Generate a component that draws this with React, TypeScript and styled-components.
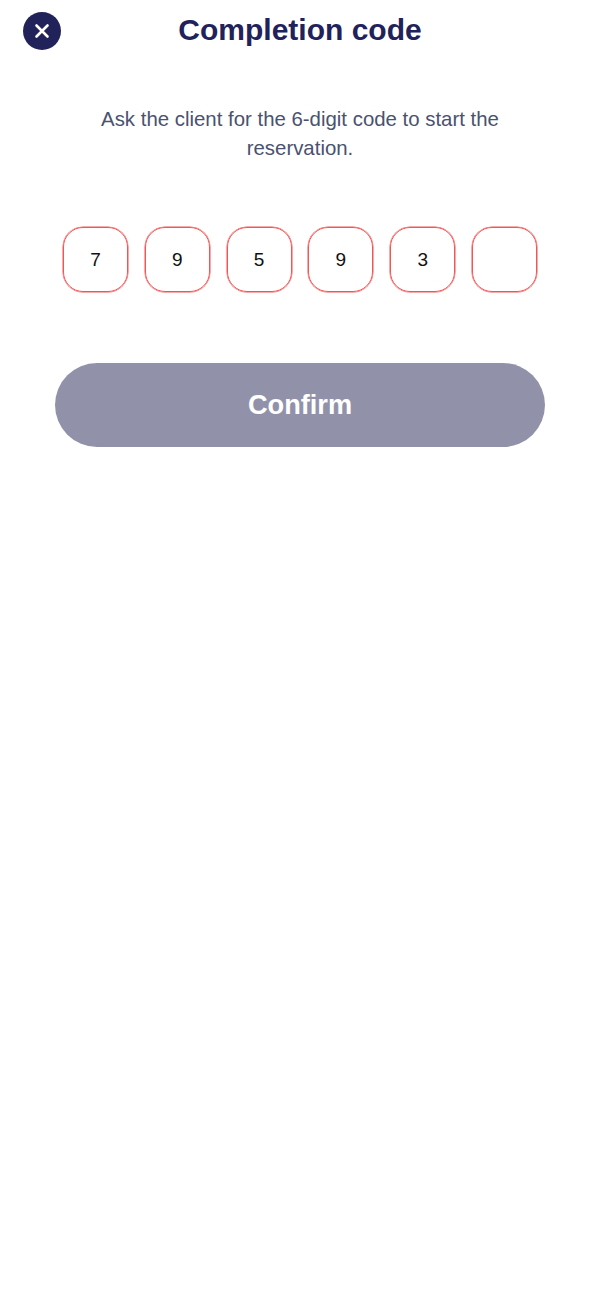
import React from "react";
import styled, { createGlobalStyle } from "styled-components";

const GlobalStyle = createGlobalStyle`
  html, body {
    margin: 0;
    padding: 0;
    background: #ffffff;
    font-family: "Liberation Sans", Arial, sans-serif;
  }
`;

const Page = styled.div`
  display: flex;
  flex-direction: column;
  width: 600px;
  height: 1303px;
  background: #ffffff;
`;

const Header = styled.header`
  display: grid;
  grid-template-columns: 38px 1fr 38px;
  align-items: center;
  padding: 11.5px 23px 0;
  height: 38px;
`;

const CloseButton = styled.button`
  display: flex;
  align-items: center;
  justify-content: center;
  width: 38px;
  height: 38px;
  padding: 0;
  border: 0;
  border-radius: 50%;
  background: #22225b;
`;

const Title = styled.h1`
  margin: 0 0 2px;
  font-size: 30px;
  line-height: 36px;
  font-weight: 700;
  color: #22225b;
  text-align: center;
`;

const Description = styled.p`
  margin: 55.5px auto 0;
  width: 420px;
  font-size: 20.4px;
  line-height: 29px;
  color: #4a5270;
  text-align: center;
`;

const CodeRow = styled.div`
  display: flex;
  justify-content: center;
  gap: 16.8px;
  margin-top: 64px;
`;

const CodeCell = styled.div`
  display: flex;
  align-items: center;
  justify-content: center;
  box-sizing: border-box;
  width: 65px;
  height: 65px;
  border: 1px solid #f25555;
  border-radius: 20px;
  box-shadow: 0 0 0 0.5px #f25555;
  font-size: 19px;
  color: #111111;
`;

const ConfirmButton = styled.button`
  display: block;
  width: 490px;
  height: 84px;
  margin: 71px auto 0;
  border: 0;
  border-radius: 42px;
  background: #9192aa;
  color: #ffffff;
  font-family: inherit;
  font-size: 27.2px;
  font-weight: 700;
`;

const digits = ["7", "9", "5", "9", "3", ""];

export default function App() {
  return (
    <Page>
      <GlobalStyle />
      <Header>
        <CloseButton aria-label="Close">
          <svg width="16" height="16" viewBox="0 0 16 16" fill="none">
            <path
              d="M2.5 2.5L13.5 13.5M13.5 2.5L2.5 13.5"
              stroke="#ffffff"
              strokeWidth="2.6"
              strokeLinecap="round"
            />
          </svg>
        </CloseButton>
        <Title>Completion code</Title>
      </Header>
      <Description>
        Ask the client for the 6-digit code to start the reservation.
      </Description>
      <CodeRow>
        {digits.map((digit, index) => (
          <CodeCell key={index}>{digit}</CodeCell>
        ))}
      </CodeRow>
      <ConfirmButton>Confirm</ConfirmButton>
    </Page>
  );
}
